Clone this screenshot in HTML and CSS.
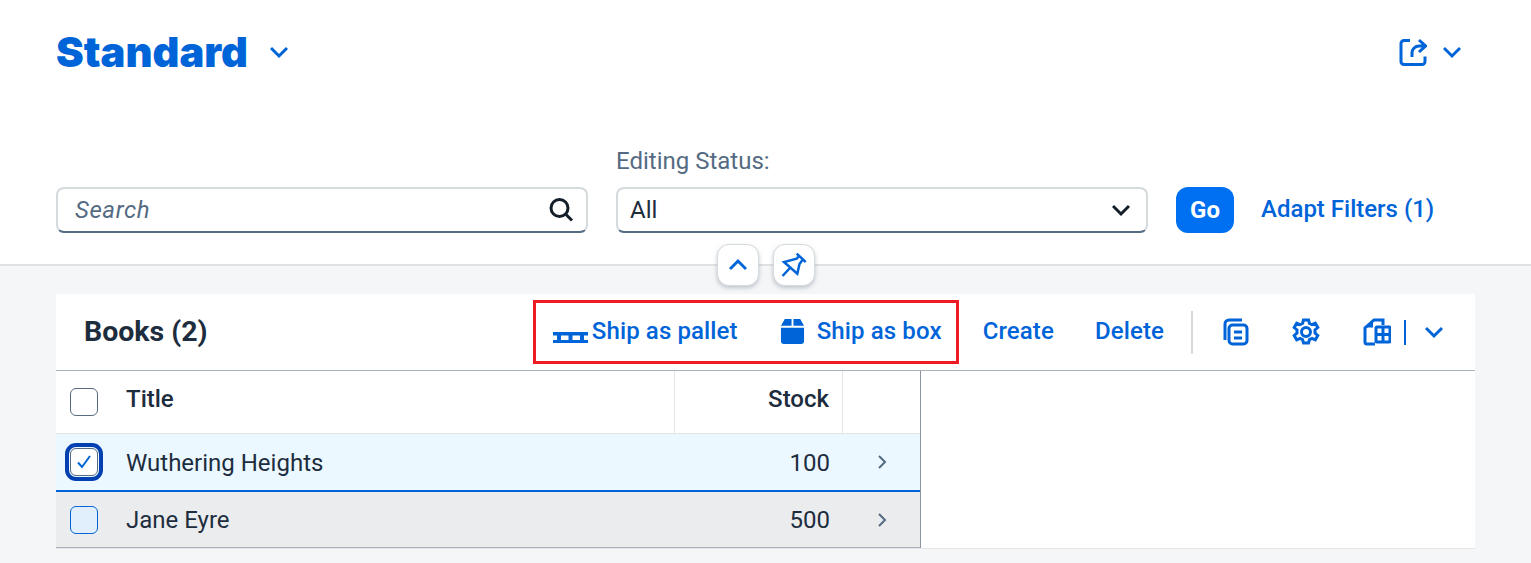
FILE: index.html
```html
<!DOCTYPE html>
<html lang="en">
<head>
    <meta charset="UTF-8">
    <meta name="viewport" content="width=device-width, initial-scale=1.0">
    <title>Books</title>
    <link rel="stylesheet" href="styles.css">
</head>
<body>
    <!-- Page header -->
    <header class="page-header">
        <div class="title-row">
            <h1 class="variant-title">Standard</h1>
            <svg class="variant-arrow" viewBox="0 0 18 18"><path d="M1 5l8 8 8-8"/></svg>
            <div class="share">
                <svg class="share-icon" viewBox="0 0 28 28"><path d="M11 2.500H5a3 3 0 0 0-3 3v18a3 3 0 0 0 3 3h18a3 3 0 0 0 3-3v-5M20 2l6.500 6-6.500 6M26 8h-6a7 7 0 0 0-7 7v4"/></svg>
                <svg class="variant-arrow" viewBox="0 0 18 18"><path d="M1 5l8 8 8-8"/></svg>
            </div>
        </div>

        <div class="filter-bar">
            <div class="field">
                <div class="input input-search">
                    <span class="placeholder">Search</span>
                    <svg class="input-icon" viewBox="0 0 26 26"><circle cx="11.500" cy="11" r="8.500"/><path d="M18 17.500l6 6"/></svg>
                </div>
            </div>
            <div class="field">
                <label class="field-label">Editing Status:</label>
                <div class="input">
                    <span class="input-value">All</span>
                    <svg class="select-arrow" viewBox="0 0 18 18"><path d="M1 5l8 8 8-8"/></svg>
                </div>
            </div>
            <button class="go-button">Go</button>
            <a class="adapt-link">Adapt Filters (1)</a>
        </div>

        <div class="header-actions">
            <span class="round-button">
                <svg viewBox="0 0 18 18"><path d="M1 13l8-8 8 8"/></svg>
            </span>
            <span class="round-button">
                <svg viewBox="0 0 26 26"><path d="M15.700 1.700l9 8.300M18 4l-2.300 2.700L3 10l13.300 11.700L18.500 12 22 7.300M8.500 16.500L1.500 24"/></svg>
            </span>
        </div>
    </header>

    <!-- Books table -->
    <section class="card">
        <div class="toolbar">
            <h2 class="table-title">Books (2)</h2>
            <div class="toolbar-actions">
                <a class="action action-pallet">
                    <svg class="pallet-icon" viewBox="0 0 35 11"><path d="M0 0h35v3.500H0zM0 8h35v3H0zM4 3h4v6H4zM15.500 3h4v6h-4zM27 3h4v6h-4z"/></svg>
                    Ship as pallet
                </a>
                <a class="action action-box">
                    <svg class="box-icon" viewBox="0 0 26 26"><path d="M5 0h7v7H1zM14 0h7l4 7H14zM1 9h24v14a3 3 0 0 1-3 3H4a3 3 0 0 1-3-3z"/></svg>
                    Ship as box
                </a>
                <a class="action">Create</a>
                <a class="action action-delete">Delete</a>
                <span class="toolbar-separator"></span>
                <svg class="tool-icon tool-copy" viewBox="0 0 26 28"><path d="M19 2H6a4 4 0 0 0-4 4v16"/><rect x="6" y="7" width="18" height="19" rx="3.500"/><path d="M11 14h8M11 20h8"/></svg>
                <svg class="tool-icon tool-gear" viewBox="0 0 28 28"><circle cx="14" cy="14" r="4.500"/><path d="M11.500 2h5l1 3.500 2.500 1.200 3.300-1.500 2.500 4.300-2.800 2.500v3l2.800 2.500-2.500 4.300-3.300-1.500-2.500 1.200-1 3.500h-5l-1-3.500-2.500-1.200-3.300 1.500-2.500-4.300 2.800-2.500v-3L2.200 9.500l2.500-4.300L8 6.700l2.500-1.200z"/></svg>
                <svg class="tool-icon tool-export" viewBox="0 0 28 28"><path d="M20 7V2h-9L2 10v14a2 2 0 0 0 2 2h8"/><path class="tool-fold" d="M10 3L3 9.500h7z"/><rect x="13" y="9" width="14" height="15" rx="1"/><path d="M20 9v15M13 16.500h14"/></svg>
                <span class="split-line"></span>
                <svg class="variant-arrow tool-arrow" viewBox="0 0 18 18"><path d="M1 5l8 8 8-8"/></svg>
            </div>
        </div>

        <div class="table">
            <div class="row row-head">
                <div class="cell cell-select"><span class="checkbox"></span></div>
                <div class="cell cell-title">Title</div>
                <div class="cell cell-stock">Stock</div>
                <div class="cell cell-nav"></div>
            </div>
            <div class="row row-selected">
                <div class="cell cell-select">
                    <span class="checkbox checkbox-focus">
                        <svg viewBox="0 0 18 18"><path d="M3 9.500l4 4.500 8-11"/></svg>
                    </span>
                </div>
                <div class="cell cell-title">Wuthering Heights</div>
                <div class="cell cell-stock">100</div>
                <div class="cell cell-nav"><svg class="nav-arrow" viewBox="0 0 10 14"><path d="M2 1l6 6-6 6"/></svg></div>
            </div>
            <div class="row row-hover">
                <div class="cell cell-select"><span class="checkbox checkbox-hover"></span></div>
                <div class="cell cell-title">Jane Eyre</div>
                <div class="cell cell-stock">500</div>
                <div class="cell cell-nav"><svg class="nav-arrow" viewBox="0 0 10 14"><path d="M2 1l6 6-6 6"/></svg></div>
            </div>
        </div>

        <!-- Red annotation around the custom actions -->
        <div class="highlight-box"></div>
    </section>
</body>
</html>
```

FILE: styles.css
```css
* {
    box-sizing: border-box;
}

html, body {
    height: 563px;
    overflow: hidden;
}

body {
    font-family: Roboto, Arial, sans-serif;
    margin: 0;
    padding: 0;
    background: #f5f6f7;
    color: #1d2d3e;
    font-size: 24px;
}

svg {
    fill: none;
    stroke: #0064d9;
    stroke-width: 3;
    flex: none;
}

/* header */
.page-header {
    position: relative;
    height: 266px;
    padding: 0 70px 0 56px;
    background: white;
    border-bottom: 2px solid #dfe1e3;
}

.title-row {
    display: flex;
    align-items: center;
    height: 103px;
}

.variant-title {
    margin: 0 22px 0 0;
    font-family: Inter, Arial, sans-serif;
    font-size: 41.700px;
    font-weight: 900;
    color: #0064d9;
}

.variant-arrow {
    width: 18px;
    height: 18px;
}

.share {
    display: flex;
    align-items: center;
    gap: 16px;
    margin-left: auto;
}

.share-icon {
    width: 28px;
    height: 28px;
}

.filter-bar {
    display: flex;
    align-items: flex-end;
    height: 130px;
}

.field {
    width: 532px;
    margin-right: 28px;
}

.field-label {
    display: block;
    margin-bottom: 12px;
    color: #556b82;
}

.input {
    display: flex;
    align-items: center;
    justify-content: space-between;
    height: 46px;
    padding: 0 16px 0 12px;
    background: white;
    border: 2px solid #d5dadd;
    border-bottom-color: #556b82;
    border-radius: 8px;
}

.input-search {
    padding-right: 12px;
}

.placeholder {
    font-style: italic;
    letter-spacing: 0.6px;
    color: #556b82;
    padding-left: 5px;
}

.input-icon {
    width: 26px;
    height: 26px;
    stroke: #131e29;
}

.select-arrow {
    width: 18px;
    height: 18px;
    stroke: #131e29;
}

.go-button {
    width: 58px;
    height: 46px;
    margin-right: 27px;
    padding: 0;
    font-family: inherit;
    font-size: 24px;
    font-weight: 700;
    color: white;
    background: #0070f2;
    border: none;
    border-radius: 12px;
}

.adapt-link {
    height: 46px;
    line-height: 44px;
    font-weight: 500;
    color: #0064d9;
}

.header-actions {
    position: absolute;
    left: 717px;
    top: 244px;
    display: flex;
    gap: 14px;
}

.round-button {
    display: flex;
    align-items: center;
    justify-content: center;
    width: 42px;
    height: 42px;
    background: white;
    border: 1px solid #d5dadd;
    border-radius: 12px;
    box-shadow: 0 2px 4px rgba(85, 107, 130, 0.35);
}

.round-button svg {
    width: 18px;
    height: 18px;
}

.round-button + .round-button svg {
    width: 26px;
    height: 26px;
    stroke-width: 2.500;
}

/* card */
.card {
    position: relative;
    width: 1419px;
    margin: 28px 0 0 56px;
    background: white;
    border-bottom: 1px solid #e5e5e5;
}

.toolbar {
    display: flex;
    align-items: center;
    justify-content: space-between;
    height: 77px;
    padding: 0 32px 0 28px;
    border-bottom: 1px solid #a8b2bd;
}

.table-title {
    margin: 0 0 2px;
    font-size: 28.500px;
    font-weight: 700;
}

.toolbar-actions {
    display: flex;
    align-items: center;
}

.action {
    display: flex;
    align-items: center;
    margin: -2px 41px 0 0;
    font-weight: 500;
    letter-spacing: 0.12px;
    color: #0064d9;
}

.action-pallet {
    margin-right: 42px;
}

.action-delete {
    margin-right: 27px;
}

.pallet-icon {
    width: 35px;
    height: 11px;
    margin: 12px 4px 0 0;
    fill: #0064d9;
    stroke: none;
}

.box-icon {
    width: 25px;
    height: 25px;
    margin-right: 12px;
    fill: #0064d9;
    stroke: none;
}

.toolbar-separator {
    width: 2px;
    height: 43px;
    margin-right: 30px;
    background: #d5dadd;
}

.tool-icon {
    width: 26px;
    height: 28px;
}

.tool-copy {
    margin-right: 43px;
}

.tool-gear {
    width: 28px;
    margin-right: 43px;
}

.tool-export {
    width: 28px;
}

.tool-fold {
    fill: #0064d9;
    stroke: none;
}

.split-line {
    width: 2px;
    height: 25px;
    margin: 0 19px 0 13px;
    background: #0064d9;
}

/* table */
.table {
    width: 865px;
    border-right: 1px solid #8c959f;
}

.row {
    display: grid;
    grid-template-columns: 70px 549px 168px 77px;
    align-items: stretch;
    border-bottom: 1px solid #e5e5e5;
}

.row-head {
    height: 63px;
    font-weight: 500;
}

.row-selected {
    height: 58px;
    background: #ebf8ff;
    border-bottom: 2px solid #0064d9;
}

.row-hover {
    height: 56px;
    background: #eaecee;
    border-bottom: 1px solid #a8b2bd;
}

.cell {
    display: flex;
    align-items: center;
}

.row-head .cell-title,
.row-head .cell-stock {
    padding-bottom: 6px;
    border-right: 1px solid #e5e5e5;
}

.row-selected .cell-title,
.row-selected .cell-stock {
    padding-top: 2px;
}

.cell-select {
    padding-left: 14px;
}

.cell-stock {
    justify-content: flex-end;
    padding-right: 13px;
}

.cell-nav {
    justify-content: center;
}

.checkbox {
    display: flex;
    align-items: center;
    justify-content: center;
    width: 28px;
    height: 28px;
    background: white;
    border: 1px solid #556b82;
    border-radius: 6px;
}

.checkbox svg {
    width: 18px;
    height: 18px;
    stroke-width: 2;
}

.checkbox-focus {
    outline: 4px solid #0040b0;
    outline-offset: 1px;
}

.checkbox-hover {
    background: #e1effd;
    border-color: #0064d9;
}

.nav-arrow {
    width: 10px;
    height: 14px;
    stroke: #556b82;
    stroke-width: 2;
}

/* annotation */
.highlight-box {
    position: absolute;
    left: 477px;
    top: 6px;
    width: 426px;
    height: 64px;
    border: 3px solid #ed1c24;
}
```
